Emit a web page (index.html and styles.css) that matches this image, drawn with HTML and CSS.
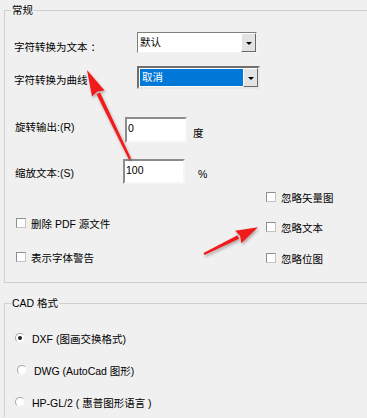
FILE: index.html
```html
<!DOCTYPE html>
<html lang="zh-CN">
<head>
<meta charset="utf-8">
<title>导出选项</title>
<link rel="stylesheet" href="styles.css">
</head>
<body>
<div class="page">
  <div class="group g1">
    <div class="legend">常规</div>
    <div class="row r1">
      <span class="lbl l1">字符转换为文本 ：</span>
      <div class="combo c1"><span class="val">默认</span><span class="btn"><i class="tri"></i></span></div>
    </div>
    <div class="row r2">
      <span class="lbl l2">字符转换为曲线</span>
      <div class="combo c2"><span class="val sel">取消</span><span class="btn"><i class="tri"></i></span></div>
    </div>
    <div class="row r3">
      <span class="lbl l3">旋转输出:(R)</span>
      <div class="input">0</div>
      <span class="unit u3">度</span>
    </div>
    <div class="row r4">
      <span class="lbl l4">缩放文本:(S)</span>
      <div class="input">100</div>
      <span class="unit u4">%</span>
    </div>
    <div class="checks">
      <div class="col left">
        <div class="chk"><span class="box"></span><span>删除 PDF 源文件</span></div>
        <div class="chk gap20"><span class="box"></span><span>表示字体警告</span></div>
      </div>
      <div class="col right">
        <div class="chk"><span class="box"></span><span>忽略矢量图</span></div>
        <div class="chk gap16"><span class="box"></span><span>忽略文本</span></div>
        <div class="chk gap17"><span class="box"></span><span>忽略位图</span></div>
      </div>
    </div>
  </div>

  <div class="group g2">
    <div class="legend">CAD 格式</div>
    <div class="radio first"><span class="circ on"></span><span>DXF (图画交换格式)</span></div>
    <div class="radio shift"><span class="circ"></span><span>DWG (AutoCad 图形)</span></div>
    <div class="radio"><span class="circ"></span><span>HP-GL/2 ( 惠普图形语言 )</span></div>
  </div>
</div>

<svg class="arrows" width="367" height="418" viewBox="0 0 367 418" aria-hidden="true">
  <defs>
    <filter id="sh" x="-30%" y="-30%" width="160%" height="160%">
      <feDropShadow dx="1" dy="2" stdDeviation="1.5" flood-color="#000" flood-opacity="0.3"/>
    </filter>
  </defs>
  <g fill="#f01c1c" filter="url(#sh)">
    <polygon points="131.1,158.5 128.9,159.5 96.5,94.3 100.1,92.5"/>
    <polygon points="87,70 104.6,90.4 97.4,91.6 92.0,96.4"/>
    <polygon points="204.5,255.1 203.5,252.9 237.4,235.2 239.2,238.8"/>
    <polygon points="258,227.3 241.4,243.3 240.1,236.1 235.2,230.7"/>
  </g>
</svg>
</body>
</html>
```

FILE: styles.css
```css
html, body {
  margin: 0;
  height: 100%;
  overflow: hidden;
  background: #f0f0f0;
}
body {
  font-family: "Liberation Sans", "Noto Sans CJK SC", sans-serif;
  font-size: 10.5px;
  color: #000;
  position: relative;
}
.page {
  padding-top: 10px;
}
.group {
  margin-left: 4px;
  margin-right: -12px;
  border: 1px solid #cfcfcf;
  border-right: 0;
}
.g2 {
  margin-top: 20px;
  height: 113px;
  border-bottom: 0;
}
.legend {
  width: max-content;
  margin: -8px 0 0 6px;
  padding: 0 1px;
  height: 14px;
  line-height: 14px;
  background: #f0f0f0;
}
.row {
  display: flex;
  align-items: flex-start;
}
.lbl, .unit {
  height: 14px;
  line-height: 14px;
  white-space: nowrap;
}
.r1 { margin-top: 15px; height: 21px; padding-left: 9px; }
.l1 { width: 123px; margin-top: 8px; }
.r2 { margin-top: 13px; height: 23px; padding-left: 9px; }
.l2 { width: 123px; margin-top: 7px; }
.r3 { margin-top: 28px; height: 26px; padding-left: 10px; }
.l3 { width: 110px; margin-top: 3px; }
.u3 { margin-left: 6px; margin-top: 9px; }
.r4 { margin-top: 16px; height: 25px; padding-left: 10px; }
.l4 { width: 108px; margin-top: 7px; }
.u4 { margin-left: 13px; margin-top: 8px; }

.combo {
  box-sizing: border-box;
  height: 100%;
  display: flex;
  background: #fff;
  border: 1px solid;
  border-color: #7f7f7f #f4f4f4 #f4f4f4 #7f7f7f;
}
.c1 { width: 120px; }
.c2 {
  width: 123px;
  border-width: 2px;
  border-color: #6f6f6f #e8e8e8 #e8e8e8 #6f6f6f;
}
.val {
  flex: 1;
  padding-left: 2px;
  line-height: 19px;
}
.c2 .val { margin: 1px 0 1px 1px; line-height: 17px; }
.val.sel {
  background: #0078d7;
  color: #fff;
}
.btn {
  box-sizing: border-box;
  width: 15px;
  background: #e3e3e3;
  border: 1px solid;
  border-color: #ffffff #6a6a6a #6a6a6a #ffffff;
  display: flex;
  align-items: center;
  justify-content: center;
}
.tri {
  width: 0;
  height: 0;
  border-left: 3px solid transparent;
  border-right: 3px solid transparent;
  border-top: 3px solid #000;
  margin-top: 1px;
}
.input {
  box-sizing: border-box;
  width: 62px;
  height: 100%;
  background: #fff;
  border: 2px solid;
  border-color: #8c8c8c #f6f6f6 #f6f6f6 #8c8c8c;
  padding: 2px 0 0 1px;
  line-height: 14px;
}

.checks {
  display: flex;
  padding-bottom: 17px;
}
.col { display: flex; flex-direction: column; }
.left { width: 250px; padding-left: 11px; padding-top: 32px; }
.right { padding-top: 6px; }
.chk {
  display: flex;
  align-items: center;
  height: 14px;
  white-space: nowrap;
}
.gap20 { margin-top: 20px; }
.gap16 { margin-top: 16px; }
.gap17 { margin-top: 17px; }
.box {
  box-sizing: border-box;
  width: 10px;
  height: 10px;
  margin-right: 5px;
  background: #fff;
  border: 1px solid;
  border-color: #8e8e8e #c4c4c4 #c4c4c4 #8e8e8e;
}

.radio {
  display: flex;
  align-items: center;
  height: 14px;
  padding-left: 10px;
  margin-top: 18px;
  white-space: nowrap;
}
.radio.first { margin-top: 21px; }
.radio.shift { padding-left: 12px; }
.circ {
  box-sizing: border-box;
  width: 10px;
  height: 10px;
  margin-right: 7px;
  border-radius: 50%;
  background: #fff;
  border: 1px solid;
  border-color: #a6a6a6 #f2f2f2 #f2f2f2 #a6a6a6;
  display: flex;
  align-items: center;
  justify-content: center;
}
.circ.on::after {
  content: "";
  width: 4px;
  height: 4px;
  border-radius: 50%;
  background: #222;
}

.arrows {
  position: absolute;
  left: 0;
  top: 0;
  pointer-events: none;
}
```
